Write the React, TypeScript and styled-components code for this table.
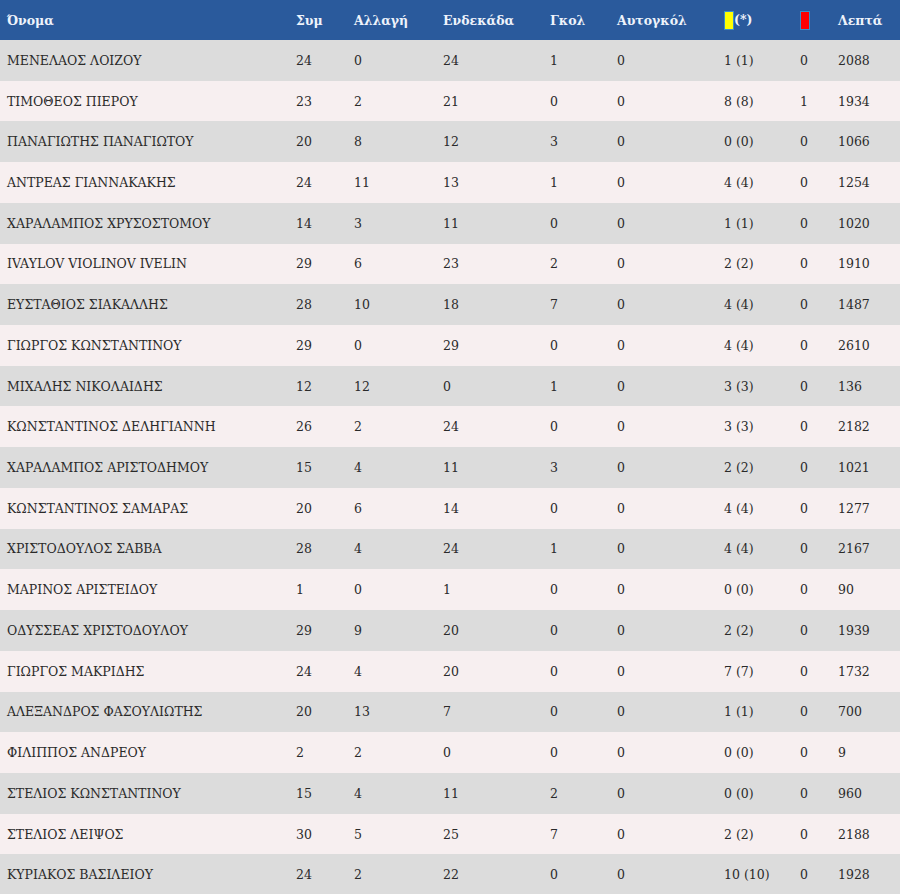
import styled, { createGlobalStyle } from "styled-components"

const GlobalStyle = createGlobalStyle`
  html, body {
    margin: 0;
    padding: 0;
    background: #ffffff;
  }
  body {
    font-family: "DejaVu Serif", "Liberation Serif", serif;
  }
`

const COLS = "289px 58px 89px 107px 67px 107px 76px 38px 69px"

const Table = styled.div`
  width: 900px;
  display: flex;
  flex-direction: column;
`

const HeadRow = styled.div`
  display: grid;
  grid-template-columns: ${COLS};
  height: 40px;
  align-items: center;
  background: #2a5a9c;
  color: #eef3fb;
  font-size: 12.5px;
  font-weight: bold;
`

const Row = styled.div<{ $odd: boolean }>`
  display: grid;
  grid-template-columns: ${COLS};
  height: 40.72px;
  flex-shrink: 0;
  align-items: center;
  background: ${(p) => (p.$odd ? "#dcdcdc" : "#f7eff0")};
  color: #2a2a2a;
  font-size: 12.5px;
`

const Cell = styled.div`
  padding-left: 7px;
  white-space: nowrap;
  overflow: hidden;
`

const Card = styled.span<{ $color: string }>`
  display: inline-block;
  width: 8px;
  height: 17px;
  background: ${(p) => p.$color};
  border: 1px solid #3a8fc7;
  vertical-align: middle;
`

type Player = [string, number, number, number, number, number, string, number, number]

const players: Player[] = [
  ["ΜΕΝΕΛΑΟΣ ΛΟΙΖΟΥ", 24, 0, 24, 1, 0, "1 (1)", 0, 2088],
  ["ΤΙΜΟΘΕΟΣ ΠΙΕΡΟΥ", 23, 2, 21, 0, 0, "8 (8)", 1, 1934],
  ["ΠΑΝΑΓΙΩΤΗΣ ΠΑΝΑΓΙΩΤΟΥ", 20, 8, 12, 3, 0, "0 (0)", 0, 1066],
  ["ΑΝΤΡΕΑΣ ΓΙΑΝΝΑΚΑΚΗΣ", 24, 11, 13, 1, 0, "4 (4)", 0, 1254],
  ["ΧΑΡΑΛΑΜΠΟΣ ΧΡΥΣΟΣΤΟΜΟΥ", 14, 3, 11, 0, 0, "1 (1)", 0, 1020],
  ["IVAYLOV VIOLINOV IVELIN", 29, 6, 23, 2, 0, "2 (2)", 0, 1910],
  ["ΕΥΣΤΑΘΙΟΣ ΣΙΑΚΑΛΛΗΣ", 28, 10, 18, 7, 0, "4 (4)", 0, 1487],
  ["ΓΙΩΡΓΟΣ ΚΩΝΣΤΑΝΤΙΝΟΥ", 29, 0, 29, 0, 0, "4 (4)", 0, 2610],
  ["ΜΙΧΑΛΗΣ ΝΙΚΟΛΑΙΔΗΣ", 12, 12, 0, 1, 0, "3 (3)", 0, 136],
  ["ΚΩΝΣΤΑΝΤΙΝΟΣ ΔΕΛΗΓΙΑΝΝΗ", 26, 2, 24, 0, 0, "3 (3)", 0, 2182],
  ["ΧΑΡΑΛΑΜΠΟΣ ΑΡΙΣΤΟΔΗΜΟΥ", 15, 4, 11, 3, 0, "2 (2)", 0, 1021],
  ["ΚΩΝΣΤΑΝΤΙΝΟΣ ΣΑΜΑΡΑΣ", 20, 6, 14, 0, 0, "4 (4)", 0, 1277],
  ["ΧΡΙΣΤΟΔΟΥΛΟΣ ΣΑΒΒΑ", 28, 4, 24, 1, 0, "4 (4)", 0, 2167],
  ["ΜΑΡΙΝΟΣ ΑΡΙΣΤΕΙΔΟΥ", 1, 0, 1, 0, 0, "0 (0)", 0, 90],
  ["ΟΔΥΣΣΕΑΣ ΧΡΙΣΤΟΔΟΥΛΟΥ", 29, 9, 20, 0, 0, "2 (2)", 0, 1939],
  ["ΓΙΩΡΓΟΣ ΜΑΚΡΙΔΗΣ", 24, 4, 20, 0, 0, "7 (7)", 0, 1732],
  ["ΑΛΕΞΑΝΔΡΟΣ ΦΑΣΟΥΛΙΩΤΗΣ", 20, 13, 7, 0, 0, "1 (1)", 0, 700],
  ["ΦΙΛΙΠΠΟΣ ΑΝΔΡΕΟΥ", 2, 2, 0, 0, 0, "0 (0)", 0, 9],
  ["ΣΤΕΛΙΟΣ ΚΩΝΣΤΑΝΤΙΝΟΥ", 15, 4, 11, 2, 0, "0 (0)", 0, 960],
  ["ΣΤΕΛΙΟΣ ΛΕΙΨΟΣ", 30, 5, 25, 7, 0, "2 (2)", 0, 2188],
  ["ΚΥΡΙΑΚΟΣ ΒΑΣΙΛΕΙΟΥ", 24, 2, 22, 0, 0, "10 (10)", 0, 1928],
]

export default function App() {
  return (
    <>
      <GlobalStyle />
      <Table>
        <HeadRow>
          <Cell>Όνομα</Cell>
          <Cell>Συμ</Cell>
          <Cell>Αλλαγή</Cell>
          <Cell>Ενδεκάδα</Cell>
          <Cell>Γκολ</Cell>
          <Cell>Αυτογκόλ</Cell>
          <Cell>
            <Card $color="#ffff00" />
            (*)
          </Cell>
          <Cell>
            <Card $color="#ff0000" />
          </Cell>
          <Cell>Λεπτά</Cell>
        </HeadRow>
        {players.map((p, i) => (
          <Row key={p[0]} $odd={i % 2 === 0}>
            {p.map((v, j) => (
              <Cell key={j}>{v}</Cell>
            ))}
          </Row>
        ))}
      </Table>
    </>
  )
}
